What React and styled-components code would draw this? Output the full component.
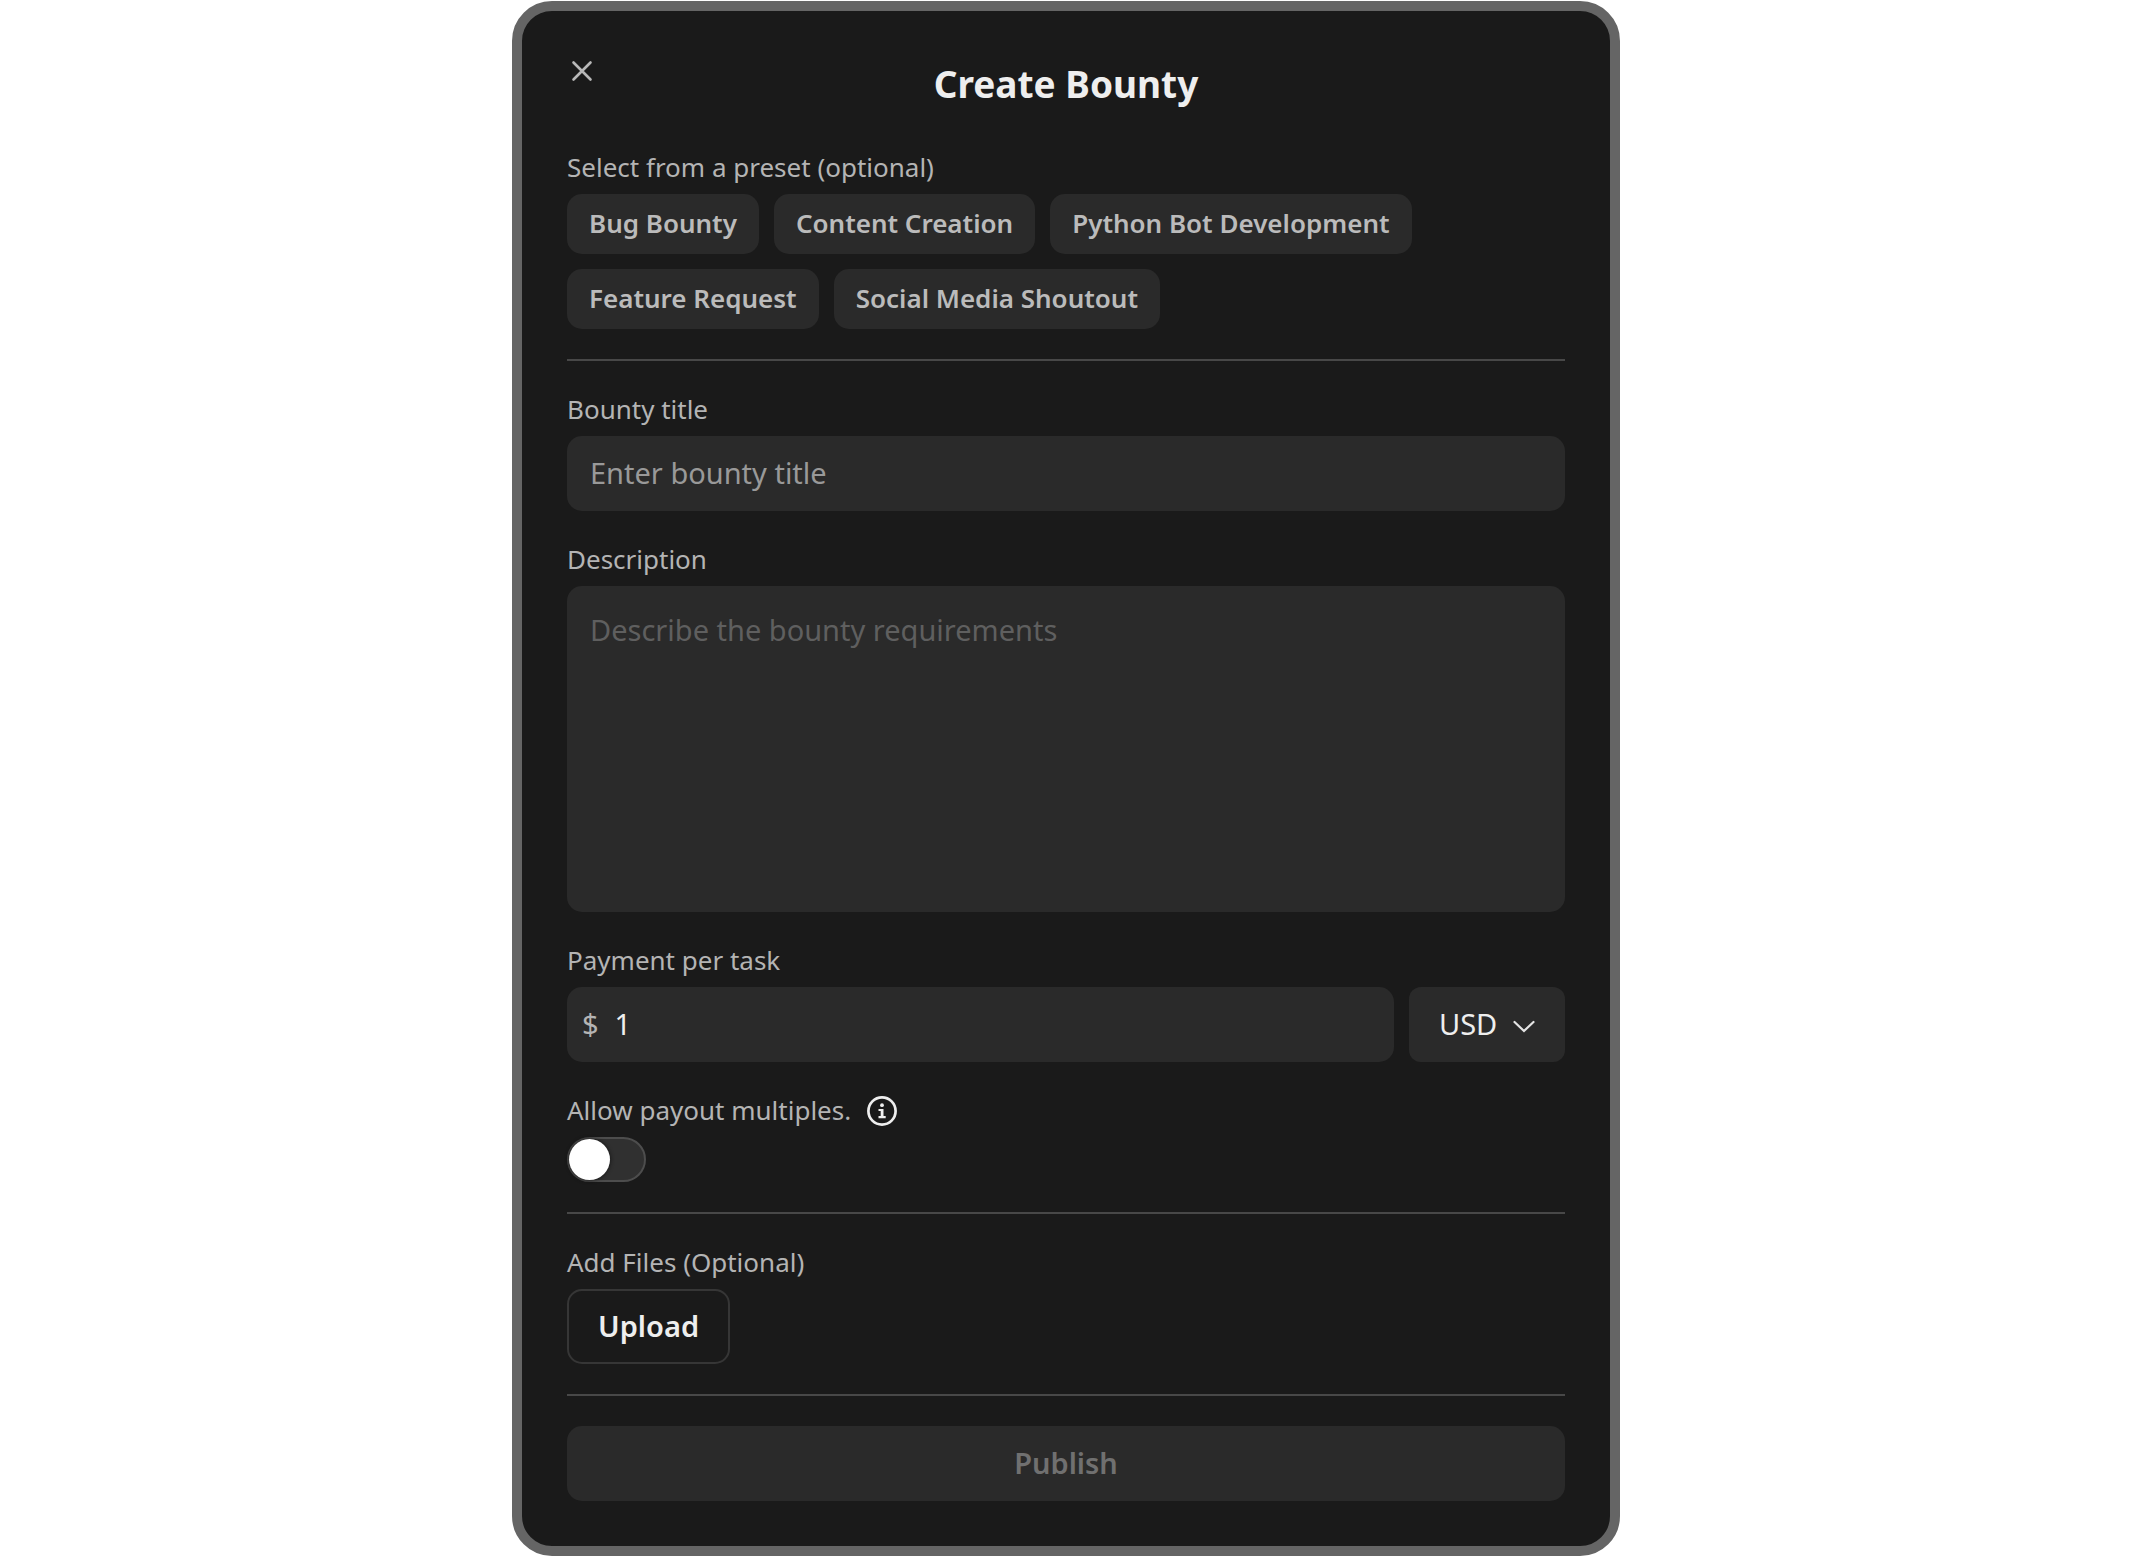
import React, {useState} from 'react';
import styled, {createGlobalStyle} from 'styled-components';

const GlobalStyle = createGlobalStyle`
  * {
    box-sizing: border-box;
  }
  body {
    margin: 0;
    background-color: #fff;
    font-family: 'Noto Sans', sans-serif;
  }
  button, input, textarea, select {
    margin: 0;
    border: 0;
    font-family: inherit;
  }
`;

const Page = styled.main`
  display: flex;
  justify-content: center;
  padding: 1px 16px;
`;
const Modal = styled.form`
  display: flex;
  flex-direction: column;
  gap: 30px;
  width: 100%;
  max-width: 1108px;
  padding: 45px;
  border: 10px solid #656565;
  border-radius: 40px;
  background-color: #1a1a1a;
`;
const Header = styled.header`
  display: grid;
  grid-template-columns: 30px 1fr 30px;
  align-items: start;
  padding-bottom: 7px;
`;
const CloseButton = styled.button`
  display: flex;
  width: 30px;
  height: 30px;
  padding: 0;
  background: none;
  color: #b8b8b8;
  cursor: pointer;
`;
const Title = styled.h1`
  margin: 0;
  color: #eee;
  font-size: 37px;
  font-weight: 700;
  line-height: 56px;
  text-align: center;
`;
const Field = styled.div`
  display: flex;
  flex-direction: column;
  align-items: stretch;
  gap: 8px;
`;
const Label = styled.label`
  color: #b4b4b4;
  font-size: 26px;
  line-height: 37px;
`;
const LabelRow = styled.div`
  display: flex;
  align-items: center;
  gap: 16px;
`;
const Presets = styled.div`
  display: flex;
  flex-wrap: wrap;
  gap: 15px;
`;
const Preset = styled.button`
  height: 60px;
  padding: 0 22px 2px;
  border-radius: 15px;
  background-color: #2a2a2a;
  color: #bbb;
  font-size: 26px;
  font-weight: 600;
  cursor: pointer;
`;
const Divider = styled.hr`
  width: 100%;
  height: 2px;
  margin: 0;
  border: 0;
  background-color: #484848;
`;
const TextInput = styled.input`
  width: 100%;
  height: 75px;
  padding: 0 23px 3px;
  border-radius: 15px;
  background-color: #2a2a2a;
  color: #eee;
  font-size: 29px;
  outline: none;

  &::placeholder {
    color: #999;
    opacity: 1;
  }
`;
const TextArea = styled.textarea`
  display: block;
  width: 100%;
  height: 326px;
  padding: 22px 23px;
  border-radius: 15px;
  background-color: #2a2a2a;
  color: #eee;
  font-size: 29px;
  line-height: 44px;
  outline: none;
  resize: none;

  &::placeholder {
    color: #5f5f5f;
    opacity: 1;
  }
`;
const PaymentRow = styled.div`
  display: flex;
  gap: 15px;
`;
const Amount = styled.div`
  display: flex;
  flex: 1;
  align-items: center;
  min-width: 0;
  padding-left: 15px;
  border-radius: 15px;
  background-color: #2a2a2a;
`;
const Prefix = styled.span`
  padding-bottom: 3px;
  color: #b4b4b4;
  font-size: 29px;
`;
const AmountInput = styled(TextInput)`
  padding: 0 16px 3px;
  background: none;
`;
const Currency = styled.div`
  display: grid;
  flex: 0 0 156px;
  align-items: center;
`;
const CurrencySelect = styled.select`
  grid-area: 1 / 1;
  width: 100%;
  height: 75px;
  padding: 0 30px 2px;
  border-radius: 12px;
  background-color: #2a2a2a;
  color: #eee;
  font-size: 29px;
  appearance: none;
  outline: none;
`;
const Chevron = styled.svg`
  grid-area: 1 / 1;
  justify-self: end;
  margin-right: 29px;
  color: #e4e4e4;
  pointer-events: none;
`;
const InfoButton = styled.button`
  display: flex;
  padding: 0;
  background: none;
  color: #eee;
`;
const Switch = styled.input`
  display: flex;
  align-items: center;
  width: 79px;
  height: 45px;
  margin: 0;
  padding: 0;
  border: 2px solid #4d4d4d;
  border-radius: 23px;
  background-color: #303030;
  appearance: none;
  cursor: pointer;

  &::before {
    content: '';
    width: 41px;
    height: 41px;
    border-radius: 50%;
    background-color: #fff;
    box-shadow: 0 0 4px #111;
  }
  &:checked::before {
    margin-left: auto;
  }
`;
const UploadButton = styled.button`
  align-self: flex-start;
  height: 75px;
  padding: 0 29px 2px;
  border: 2px solid #363636;
  border-radius: 15px;
  background: none;
  color: #eee;
  font-size: 29px;
  font-weight: 600;
  cursor: pointer;
`;
const PublishButton = styled.button`
  height: 75px;
  padding: 0 29px 2px;
  border-radius: 15px;
  background-color: #2a2a2a;
  color: #707070;
  font-size: 29px;
  font-weight: 600;
`;

const presets = [
  {name: 'Bug Bounty', title: 'Bug bounty'},
  {name: 'Content Creation', title: 'Content creation'},
  {name: 'Python Bot Development', title: 'Python bot development'},
  {name: 'Feature Request', title: 'Feature request'},
  {name: 'Social Media Shoutout', title: 'Social media shoutout'},
];

function App() {
  const [title, setTitle] = useState('');
  const [description, setDescription] = useState('');
  const [amount, setAmount] = useState('1');
  const [multiples, setMultiples] = useState(false);

  return (
    <Page>
      <GlobalStyle/>
      <Modal onSubmit={e => e.preventDefault()}>
        <Header>
          <CloseButton type="button" aria-label="Close">
            <svg width="30" height="30" fill="none" stroke="currentColor" strokeWidth="2.6" strokeLinecap="round">
              <path d="M6.5 6.5l17 17M23.5 6.5l-17 17"/>
            </svg>
          </CloseButton>
          <Title>Create Bounty</Title>
        </Header>
        <Field>
          <Label as="span" id="presets">Select from a preset (optional)</Label>
          <Presets role="group" aria-labelledby="presets">
            {presets.map(p => (
              <Preset key={p.name} type="button" onClick={() => setTitle(p.title)}>{p.name}</Preset>
            ))}
          </Presets>
        </Field>
        <Divider/>
        <Field>
          <Label htmlFor="title">Bounty title</Label>
          <TextInput id="title" placeholder="Enter bounty title" value={title} onChange={e => setTitle(e.target.value)}/>
        </Field>
        <Field>
          <Label htmlFor="description">Description</Label>
          <TextArea
            id="description"
            placeholder="Describe the bounty requirements"
            value={description}
            onChange={e => setDescription(e.target.value)}
          />
        </Field>
        <Field>
          <Label htmlFor="amount">Payment per task</Label>
          <PaymentRow>
            <Amount>
              <Prefix>$</Prefix>
              <AmountInput id="amount" inputMode="decimal" value={amount} onChange={e => setAmount(e.target.value)}/>
            </Amount>
            <Currency>
              <CurrencySelect aria-label="Currency" defaultValue="USD">
                <option>USD</option>
              </CurrencySelect>
              <Chevron width="24" height="16" fill="none" stroke="currentColor" strokeWidth="2.2" strokeLinecap="round">
                <path d="M2.5 5l9.5 9 9.5-9"/>
              </Chevron>
            </Currency>
          </PaymentRow>
        </Field>
        <Field>
          <LabelRow>
            <Label htmlFor="multiples">Allow payout multiples.</Label>
            <InfoButton type="button" aria-label="About payout multiples">
              <svg width="30" height="30" fill="currentColor">
                <circle cx="15" cy="15" r="13.6" fill="none" stroke="currentColor" strokeWidth="2.7"/>
                <circle cx="15" cy="9.2" r="1.9"/>
                <path d="M11.5 13h5v7h2.2v2.3h-7.2V20h2.2v-4.9h-2.2z"/>
              </svg>
            </InfoButton>
          </LabelRow>
          <Switch
            id="multiples"
            type="checkbox"
            role="switch"
            checked={multiples}
            onChange={e => setMultiples(e.target.checked)}
          />
        </Field>
        <Divider/>
        <Field>
          <Label as="span" id="files">Add Files (Optional)</Label>
          <UploadButton type="button" aria-describedby="files">Upload</UploadButton>
        </Field>
        <Divider/>
        <PublishButton type="submit" disabled>Publish</PublishButton>
      </Modal>
    </Page>
  );
}

export default App;
